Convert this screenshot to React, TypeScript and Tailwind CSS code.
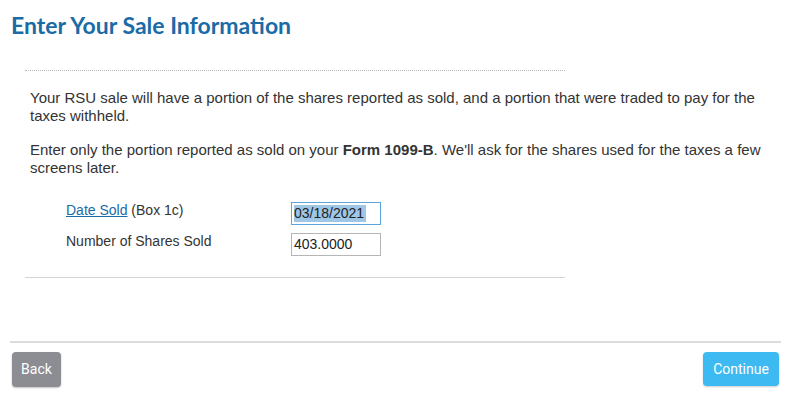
function Field({ label, value, focused }: { label: React.ReactNode; value: string; focused?: boolean }) {
  return (
    <div className="flex items-start h-[31px] pt-[4px]">
      <div className="w-[291px] pl-[66px] text-[14px] leading-[16px] text-[#333]">{label}</div>
      <div
        className={
          focused
            ? "w-[90px] h-[23px] border border-[#5aa6dc] flex items-center px-[2px] text-[14px] text-[#222]"
            : "w-[90px] h-[23px] border border-[#b5b5b5] flex items-center px-[2px] text-[14px] text-[#222]"
        }
      >
        {focused ? <span className="bg-[#9ec6e6] leading-[17px] pr-[2px]">{value}</span> : value}
      </div>
    </div>
  );
}

export default function App() {
  return (
    <div className="w-[810px] h-[400px] bg-white overflow-hidden font-['Liberation_Sans',Arial,sans-serif]">
      {/* title */}
      <h1 className="pl-[11px] pt-[10px] font-['Lato',sans-serif] font-bold text-[23px] leading-[30px] text-[#1a6ba6]">
        Enter Your Sale Information
      </h1>

      <div className="ml-[25px] w-[540px] mt-[30px] border-t border-dotted border-[#b8b8b8]" />

      {/* copy */}
      <div className="ml-[30px] mr-[40px] mt-[18px] text-[15px] leading-[18px] text-[#333]">
        <p>
          Your RSU sale will have a portion of the shares reported as sold, and a portion that were traded to pay for the
          taxes withheld.
        </p>
        <p className="mt-[16px]">
          Enter only the portion reported as sold on your <b>Form 1099-B</b>. We'll ask for the shares used for the taxes a
          few screens later.
        </p>
      </div>

      {/* form */}
      <div className="mt-[21px]">
        <Field
          label={
            <>
              <span className="text-[#1a6ba6] underline">Date Sold</span> (Box 1c)
            </>
          }
          value="03/18/2021"
          focused
        />
        <Field label="Number of Shares Sold" value="403.0000" />
      </div>

      <div className="ml-[25px] w-[540px] mt-[17px] border-t border-[#d4d4d4]" />

      {/* footer */}
      <div className="ml-[10px] w-[771px] mt-[63px] border-t-2 border-[#dcdcdc]" />
      <div className="flex justify-between pl-[12px] pr-[31px] mt-[9px] font-['Roboto',sans-serif] text-[14px] text-white">
        <button className="w-[49px] h-[35px] rounded-[4px] bg-[#8b8d93] shadow-[0_1px_2px_rgba(0,0,0,0.25)]">Back</button>
        <button className="w-[76px] h-[34px] rounded-[4px] bg-[#3dbaf2] shadow-[0_1px_2px_rgba(0,0,0,0.2)]">Continue</button>
      </div>
    </div>
  );
}
